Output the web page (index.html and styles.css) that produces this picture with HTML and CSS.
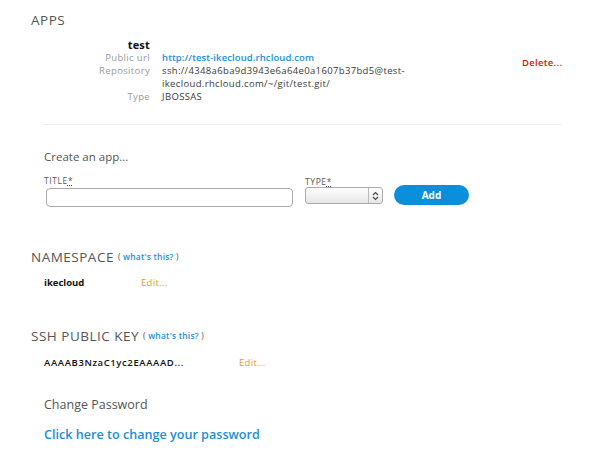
FILE: index.html
```html
<!DOCTYPE html>
<html>
<head>
<meta charset="utf-8">
<link rel="stylesheet" href="styles.css">
</head>
<body>
<div class="page">
  <section class="apps">
    <h2 class="heading">APPS</h2>
    <div class="app">
      <div class="app-info">
        <div class="row"><span class="label name">test</span><span class="value"></span></div>
        <div class="row"><span class="label">Public url</span><a class="value link" href="#">http://test-ikecloud.rhcloud.com</a></div>
        <div class="row"><span class="label">Repository</span><span class="value">ssh://4348a6ba9d3943e6a64e0a1607b37bd5@test-<br>ikecloud.rhcloud.com/~/git/test.git/</span></div>
        <div class="row"><span class="label">Type</span><span class="value">JBOSSAS</span></div>
      </div>
      <a class="delete" href="#">Delete...</a>
    </div>
    <hr class="sep">
    <div class="create">
      <div class="create-title">Create an app...</div>
      <form class="create-form">
        <div class="field field-title">
          <label class="flabel">TITLE<abbr>*</abbr></label>
          <input class="text-input" type="text">
        </div>
        <div class="field field-type">
          <label class="flabel">TYPE<abbr>*</abbr></label>
          <div class="select"><span class="select-arrow"><svg width="7" height="10" viewBox="0 0 7 10"><path d="M1 4 L3.5 1.5 L6 4 M1 6 L3.5 8.5 L6 6" fill="none" stroke="#444" stroke-width="1.1"/></svg></span></div>
        </div>
        <button class="add" type="button">Add</button>
      </form>
    </div>
  </section>

  <section class="ns">
    <h2 class="heading">NAMESPACE <span class="whats">( <a href="#">what's this?</a> )</span></h2>
    <div class="item"><span class="item-val ns-val">ikecloud</span><a class="edit" href="#">Edit...</a></div>
  </section>

  <section class="ssh">
    <h2 class="heading">SSH PUBLIC KEY <span class="whats">( <a href="#">what's this?</a> )</span></h2>
    <div class="item"><span class="item-val ssh-val">AAAAB3NzaC1yc2EAAAAD...</span><a class="edit" href="#">Edit...</a></div>
  </section>

  <section class="pw">
    <div class="pw-title">Change Password</div>
    <a class="pw-link" href="#">Click here to change your password</a>
  </section>
</div>
</body>
</html>
```

FILE: styles.css
```css
* { box-sizing: border-box; }
body {
  margin: 0;
  background: #fff;
  font-family: "Open Sans", "DejaVu Sans", sans-serif;
  color: #333;
}
a { text-decoration: none; }
.page {
  padding: 11px 0 0 31px;
  width: 605px;
}
.heading {
  margin: 0;
  font-size: 13.5px;
  font-weight: 400;
  color: #555;
  letter-spacing: 0.5px;
  line-height: 18px;
}
.app {
  display: flex;
  align-items: flex-start;
  margin-top: 9px;
}
.app-info { width: 480px; }
.row {
  display: flex;
  font-size: 9.5px;
  line-height: 13px;
  letter-spacing: 0.35px;
}
.label {
  width: 131px;
  text-align: right;
  color: #999;
  padding-right: 12px;
  flex: none;
}
.label.name {
  color: #111;
  font-weight: 700;
  font-size: 11px;
  letter-spacing: 0.2px;
}
.value { color: #3a3a3a; }
.link { color: #1a8fd6; font-weight: 600; letter-spacing: 0.1px; }
.delete {
  color: #d90f0f;
  font-size: 9.5px;
  font-weight: 600;
  letter-spacing: 0.3px;
  margin-top: 18px;
  margin-left: 11px;
}
.sep {
  border: 0;
  border-top: 1px solid #eee;
  margin: 21px 0 0 12px;
  width: 519px;
}
.create { padding-left: 13px; margin-top: 24px; }
.create-title { font-size: 11.5px; color: #555; line-height: 16px; }
.create-form {
  display: flex;
  align-items: flex-end;
  margin-top: 10px;
}
.field { display: flex; flex-direction: column; }
.flabel {
  font-size: 8.5px;
  color: #555;
  letter-spacing: 0.6px;
  line-height: 11px;
}
.flabel abbr { text-decoration: underline dotted; }
.text-input {
  margin: 2px 0 0 2px;
  width: 247px;
  height: 19px;
  border: 1px solid #aaa;
  border-radius: 4px;
  background: #fff;
}
.field-type { margin-left: 12px; }
.select {
  width: 78px;
  height: 17px;
  border: 1px solid #aaa;
  border-radius: 3px;
  background: linear-gradient(#fff, #e6e6e6);
  display: flex;
  justify-content: flex-end;
  margin-bottom: 3px;
}
.select-arrow {
  width: 14px;
  border-left: 1px solid #bbb;
  display: flex;
  align-items: center;
  justify-content: center;
}
.add {
  margin-left: 11px;
  margin-bottom: 2px;
  width: 75px;
  height: 20px;
  border: 0;
  border-radius: 10px;
  background: #0b8fdb;
  color: #fff;
  font-family: inherit;
  font-weight: 700;
  font-size: 10px;
}
.ns { margin-top: 41px; }
.whats { font-size: 8.5px; color: #555; letter-spacing: 0.2px; vertical-align: 2px; }
.whats a { color: #1a8fd6; font-weight: 600; }
.item {
  display: flex;
  padding-left: 13px;
  font-size: 9.5px;
  line-height: 13px;
}
.ns .item { margin-top: 10px; }
.ssh .item { margin-top: 11px; }
.item-val { color: #111; font-weight: 700; }
.ns-val { width: 97px; }
.ssh-val { width: 195px; font-weight: 600; letter-spacing: 0.6px; }
.edit { color: #e09a1f; letter-spacing: 0.3px; }
.ssh { margin-top: 38px; }
.pw { padding-left: 13px; margin-top: 27px; }
.pw-title { font-size: 12.5px; color: #555; line-height: 17px; }
.pw-link {
  display: block;
  margin-top: 13px;
  font-size: 12.6px;
  color: #1a8fd6;
  font-weight: 600;
  line-height: 17px;
}
```
